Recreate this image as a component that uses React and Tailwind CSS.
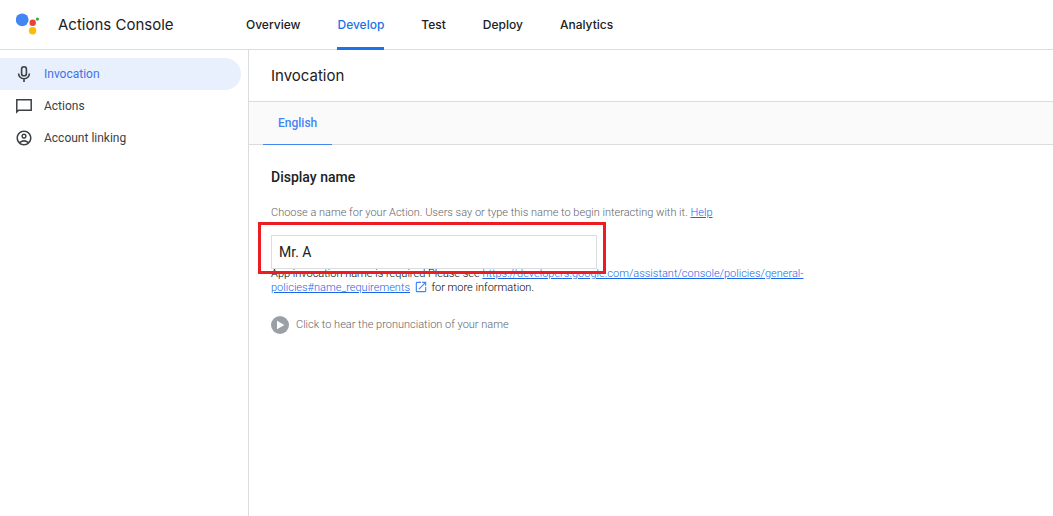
import { useState } from "react";
import { MdOpenInNew, MdOutlineAccountCircle } from "react-icons/md";

const tabs = ["Overview", "Develop", "Test", "Deploy", "Analytics"];

const sections = [
  { name: "Invocation", icon: MicIcon },
  { name: "Actions", icon: ChatIcon },
  { name: "Account linking", icon: AccountIcon },
];

function Logo() {
  return (
    <svg viewBox="0 0 24 24" className="size-6" aria-hidden="true">
      <circle cx="6.2" cy="6.8" r="6.4" fill="#4285f4" />
      <circle cx="16.7" cy="9.8" r="3.2" fill="#ea4335" />
      <circle cx="16.6" cy="17.8" r="3.7" fill="#fbbc04" />
      <circle cx="21.4" cy="6.1" r="1.6" fill="#34a853" />
    </svg>
  );
}

function MicIcon() {
  return (
    <svg viewBox="0 0 16 16" className="size-4" fill="none" stroke="#3c4043" strokeWidth="1.6">
      <rect x="5.6" y="0.8" width="4.8" height="9" rx="2.4" />
      <path d="M2.6 7.4a5.4 5.4 0 0 0 10.8 0M8 12.8V16" />
    </svg>
  );
}

function ChatIcon() {
  return (
    <svg viewBox="0 0 16 16" className="size-4" fill="none" stroke="#3c4043" strokeWidth="1.5">
      <path d="M0.8 14V1.8h14.4v10.4H2.6z" />
    </svg>
  );
}

function AccountIcon() {
  return <MdOutlineAccountCircle className="-mx-px size-[18px] text-[#3c4043]" />;
}

function PlayIcon() {
  return (
    <svg viewBox="0 0 18 18" className="size-[18px]" aria-hidden="true">
      <circle cx="9" cy="9" r="9" fill="#9aa0a6" />
      <path d="M6 4.8v8.4L13.4 9z" fill="#fff" />
    </svg>
  );
}

function Header() {
  return (
    <header className="flex h-[50px] items-stretch border-b border-[#dadce0] pl-4">
      <div className="flex w-[230px] items-center gap-[18px]">
        <Logo />
        <span className="pt-0.5 font-[Inter,sans-serif] text-[15px] text-[#202124]">
          Actions Console
        </span>
      </div>
      <nav className="-mb-px flex gap-[37px] font-[Inter,sans-serif] text-xs font-medium">
        {tabs.map((tab) => (
          <a
            key={tab}
            href="#"
            className={
              tab === "Develop"
                ? "flex items-center border-b-3 border-[#1a73e8] pt-[3px] text-[#1a73e8]"
                : "flex items-center text-[#202124]"
            }
          >
            {tab}
          </a>
        ))}
      </nav>
    </header>
  );
}

function Sidebar() {
  return (
    <aside className="w-[249px] shrink-0 border-r border-[#dadce0] pt-2 pr-[7px]">
      {sections.map(({ name, icon: Icon }) => (
        <a
          key={name}
          href="#"
          className={
            name === "Invocation"
              ? "flex h-8 items-center gap-3 rounded-r-full bg-[#e8f0fe] pl-4 text-xs text-[#4272e8]"
              : "flex h-8 items-center gap-3 pl-4 text-xs text-[#3c4043]"
          }
        >
          <Icon />
          {name}
        </a>
      ))}
    </aside>
  );
}

export default function App() {
  const [name, setName] = useState("Mr. A");

  return (
    <div className="flex min-h-screen flex-col bg-white font-[Roboto,sans-serif] text-[#202124]">
      <Header />
      <div className="flex flex-1">
        <Sidebar />
        <main className="min-w-0 flex-1">
          <h1 className="flex h-[52px] items-center border-b border-[#dadce0] pt-0.5 pl-[22px] font-[Inter,sans-serif] text-[15px]">
            Invocation
          </h1>
          <div className="flex h-[43px] border-b border-[#dadce0] bg-[#fafafa] pl-[14px]">
            <button className="-mb-px border-b border-[#4285f4] px-[15px] text-xs font-medium text-[#4285f4]">
              English
            </button>
          </div>

          <section className="max-w-[600px] px-[22px] pt-[22px] text-[11px]">
            <label htmlFor="display-name" className="block text-sm font-medium">
              Display name
            </label>
            <p className="mt-[18px] leading-4 font-light text-[#5f6368]">
              Choose a name for your Action. Users say or type this name to begin interacting with it.{" "}
              <a href="#" className="text-[#1a66e8] underline">
                Help
              </a>
            </p>

            <div className="relative mt-[14px] w-[326px]">
              <input
                id="display-name"
                value={name}
                onChange={(e) => setName(e.target.value)}
                className="block h-[34px] w-full border border-[#dadce0] px-[7px] text-sm outline-none"
              />
              {/* highlight around the field */}
              <div className="pointer-events-none absolute -top-[13px] -right-[9px] -bottom-[5px] -left-[13px] border-3 border-[#ed1c24]" />
            </div>
            <p className="-mt-[2px] leading-[13px] font-light text-black">
              App invocation name is required Please see{" "}
              <a href="#" className="text-[#1a66e8] underline">
                https://developers.google.com/assistant/console/policies/general-
                <wbr />
                policies#name_requirements
              </a>{" "}
              <MdOpenInNew className="mx-px inline size-[14px] align-[-3px] text-[#4285f4]" />{" "}
              for more information.
            </p>

            <button className="mt-[22px] flex items-center gap-[7px] font-light text-[#5f6368]">
              <PlayIcon />
              Click to hear the pronunciation of your name
            </button>
          </section>
        </main>
      </div>
    </div>
  );
}
